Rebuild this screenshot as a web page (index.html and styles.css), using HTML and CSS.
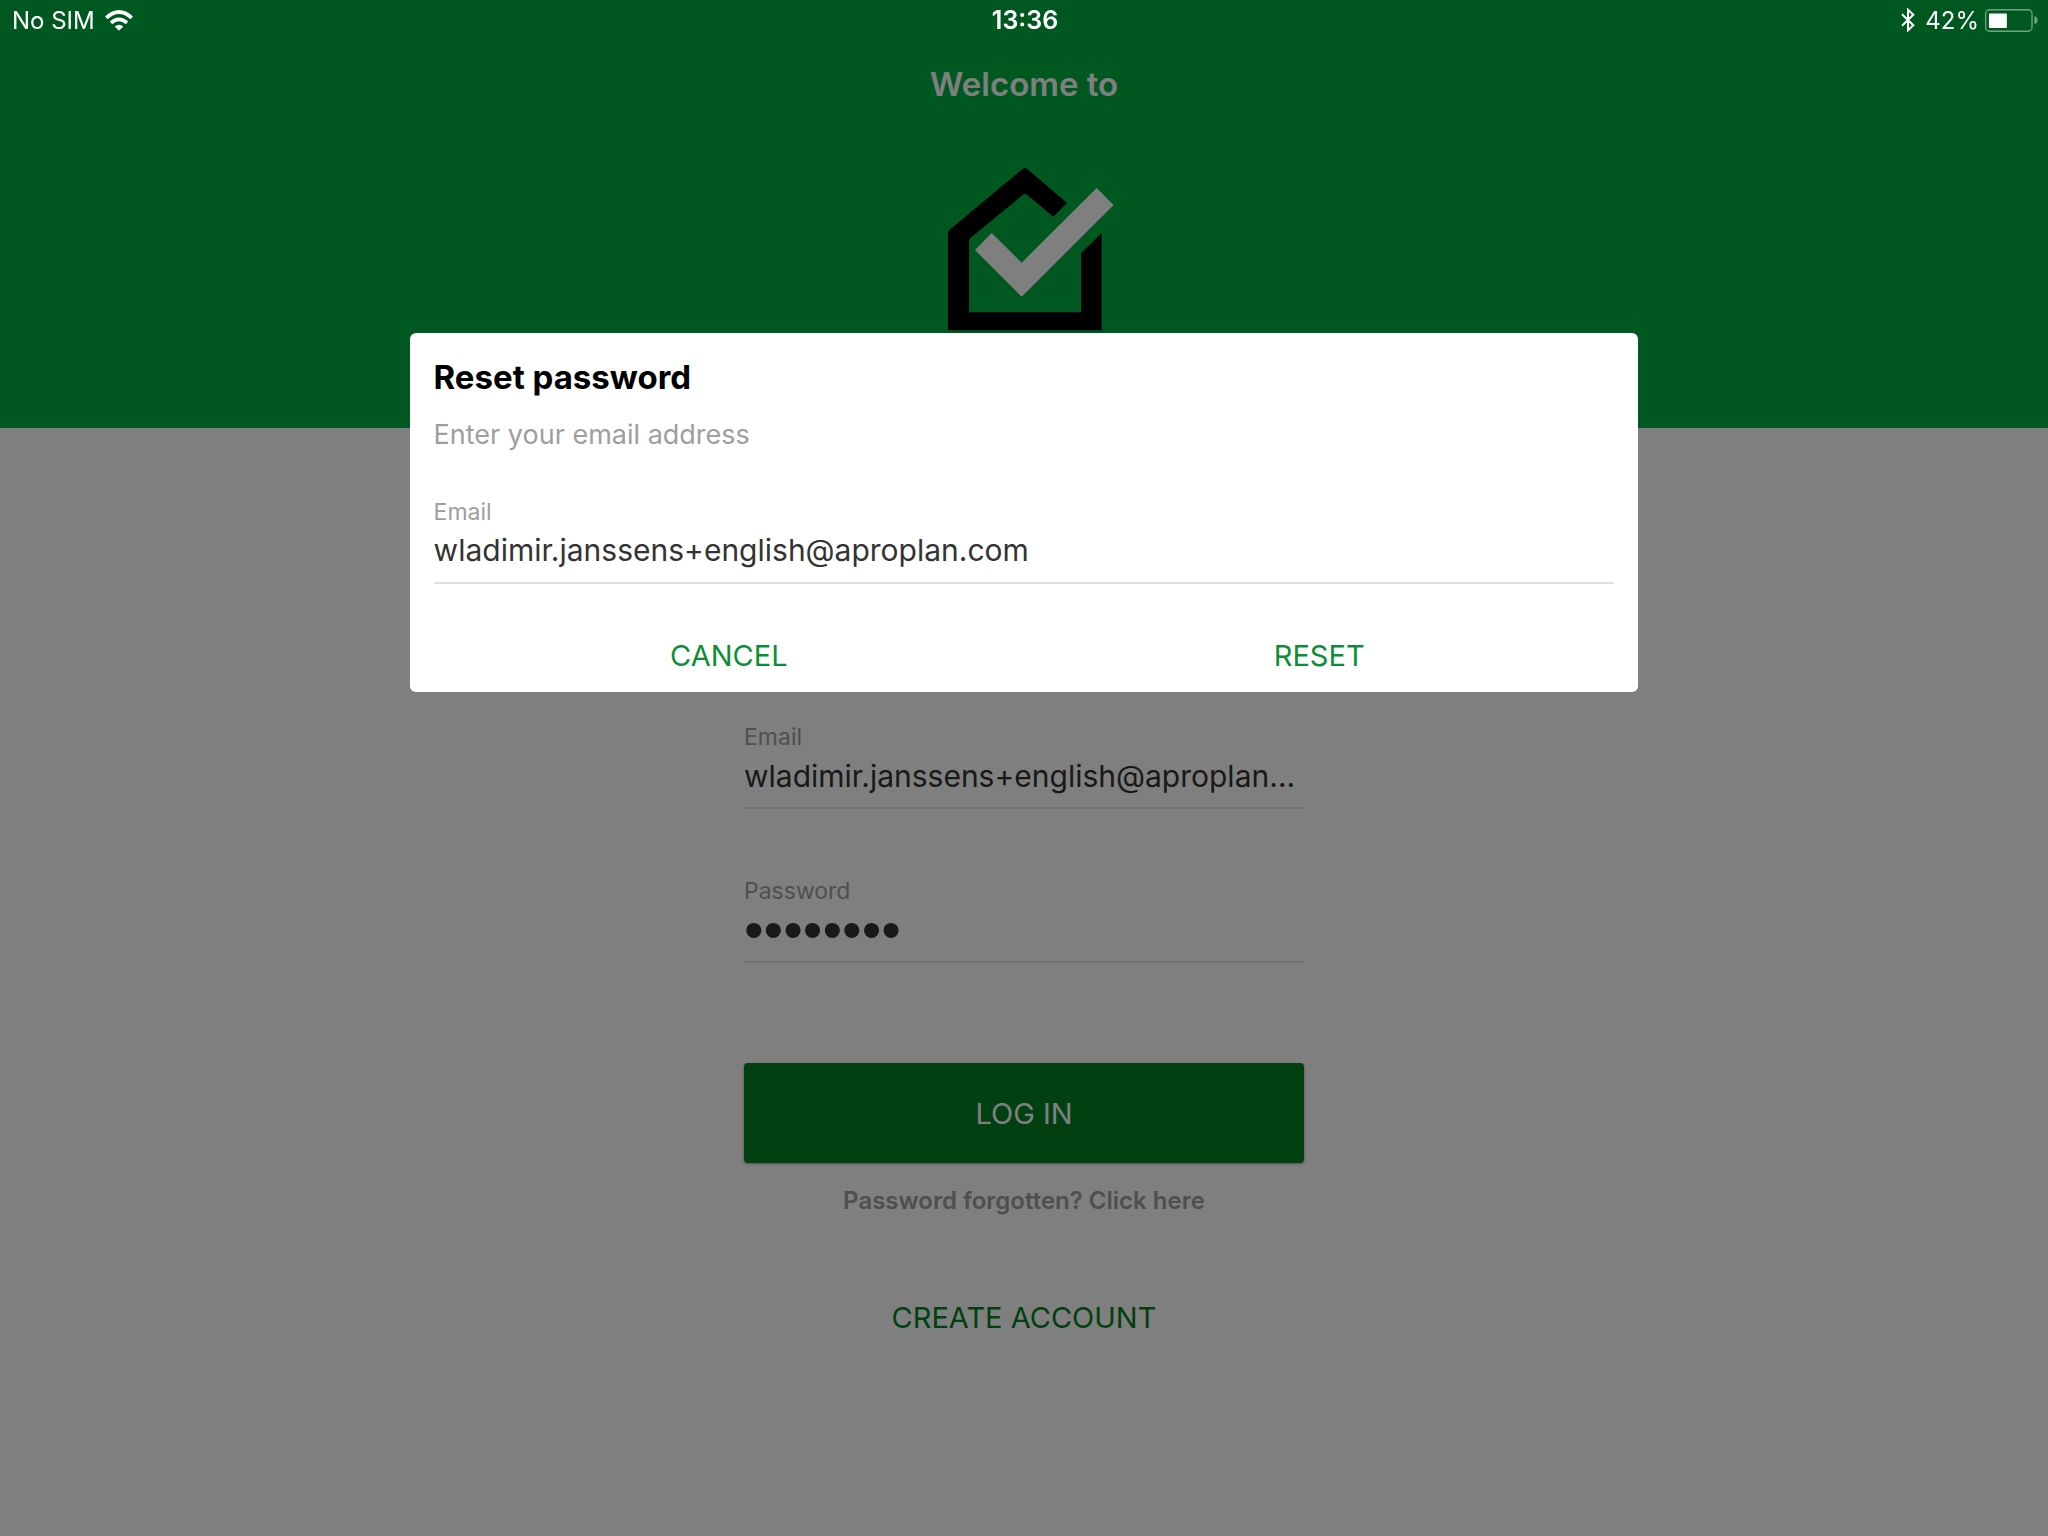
FILE: index.html
```
<!DOCTYPE html>
<html lang="en">
<head>
    <meta charset="UTF-8">
    <meta name="viewport" content="width=device-width, initial-scale=1.0">
    <title>Reset password</title>
    <link rel="stylesheet" href="styles.css">
</head>
<body>

    <header class="header">
        <div class="status-bar">
            <div class="status-left">
                <span>No SIM</span>
                <svg class="wifi" viewBox="0 0 84 62" width="28" height="21" aria-hidden="true">
                    <path d="M42 62 L29 49 Q42 38 55 49 Z" fill="#fff"/>
                    <path d="M18 38 Q42 17 66 38" fill="none" stroke="#fff" stroke-width="11"/>
                    <path d="M4 23 Q42 -12 80 23" fill="none" stroke="#fff" stroke-width="11"/>
                </svg>
            </div>
            <div class="status-time">13:36</div>
            <div class="status-right">
                <svg viewBox="0 0 42 72" width="14" height="24" aria-hidden="true">
                    <path d="M3 19 L37 52 L21 67 V5 L37 20 L3 53" fill="none" stroke="#fff" stroke-width="6"/>
                </svg>
                <span>42%</span>
                <svg class="battery" viewBox="0 0 160 69" width="53" height="23" aria-hidden="true">
                    <rect x="2" y="2" width="140" height="65" rx="12" fill="none" stroke="#fff" stroke-opacity="0.45" stroke-width="4"/>
                    <rect x="12" y="13" width="54" height="44" rx="2" fill="#fff"/>
                    <path d="M149 22 Q159 25 159 34 Q159 43 149 46 Z" fill="#fff" fill-opacity="0.45"/>
                </svg>
            </div>
        </div>
        <h1 class="welcome">Welcome to</h1>
        <svg class="logo" viewBox="42 53 540 489" width="180" height="163" aria-hidden="true">
            <path d="M309 55 Q315 51 321 55 L441 158 L400 199 L319 132 Q315 129 311 132 L150 264 Q147 267 147 271 V486 H483 V309 L545 248 V540 H84 V248 Q84 242 89 238 Z" fill="#000"/>
            <path d="M165 299 L215 248 L305 337 L530 113 L581 164 L305 439 Z" fill="#fff"/>
        </svg>
    </header>

    <main class="login">
        <form class="login-form">
            <div class="field">
                <label for="login-email">Email</label>
                <input type="text" id="login-email" value="wladimir.janssens+english@aproplan.com">
            </div>
            <div class="field">
                <label for="login-password">Password</label>
                <input type="password" id="login-password" value="password">
            </div>
            <button type="button" class="login-button">LOG IN</button>
            <a href="#" class="forgot">Password forgotten? Click here</a>
            <a href="#" class="create">CREATE ACCOUNT</a>
        </form>
    </main>

    <div class="overlay">
        <form class="modal" role="dialog" aria-labelledby="modal-title">
            <h2 id="modal-title">Reset password</h2>
            <p>Enter your email address</p>
            <div class="field">
                <label for="reset-email">Email</label>
                <input type="text" id="reset-email" value="wladimir.janssens+english@aproplan.com">
            </div>
            <div class="modal-buttons">
                <button type="button">CANCEL</button>
                <button type="button">RESET</button>
            </div>
        </form>
    </div>

</body>
</html>
```

FILE: styles.css
```
* {
    box-sizing: border-box;
}
body {
    margin: 0;
    min-height: 100vh;
    background-color: #ffffff;
    font-family: Inter, "Liberation Sans", sans-serif;
}
.header {
    display: flex;
    flex-direction: column;
    align-items: center;
    padding-bottom: 97px;
    background-color: #00b042;
}
/* stays above the overlay */
.status-bar {
    position: relative;
    z-index: 2;
    display: grid;
    grid-template-columns: 1fr auto 1fr;
    align-items: center;
    width: 100%;
    height: 40px;
    padding: 0 10px 0 12px;
    font-size: 24px;
    color: #ffffff;
}
.status-left,
.status-right {
    display: flex;
    align-items: center;
    gap: 10px;
}
.status-right {
    justify-content: flex-end;
}
.battery {
    margin-left: -4px;
}
.status-time {
    font-size: 25px;
    font-weight: 600;
}
.welcome {
    margin: 24px 0 64px;
    font-size: 33px;
    line-height: 40px;
    font-weight: 600;
    color: #ffffff;
}
.logo {
    display: block;
}
.login {
    display: flex;
    justify-content: center;
    padding-top: 294px;
}
.login-form {
    display: flex;
    flex-direction: column;
    width: 560px;
}
.field {
    display: flex;
    flex-direction: column;
}
.field label {
    font-size: 23px;
    line-height: 30px;
    color: #9e9e9e;
}
.field input {
    width: 100%;
    height: 57px;
    padding: 0 6px 8px 0;
    border: none;
    border-bottom: 2px solid #e0e0e0;
    outline: none;
    background: none;
    font-family: inherit;
    font-size: 30px;
    color: #333333;
    text-overflow: ellipsis;
}
/* bigger dots */
.field input[type="password"] {
    font-family: "Liberation Sans", Arial, sans-serif;
    font-size: 56px;
}
.login-form .field {
    margin-bottom: 67px;
}
.login-button {
    height: 100px;
    margin-top: 33px;
    border: none;
    border-radius: 4px;
    box-shadow: 0 1px 3px rgba(0, 0, 0, 0.4);
    background-color: #008022;
    font-family: inherit;
    font-size: 29px;
    color: #ffffff;
    cursor: pointer;
}
.forgot,
.create {
    align-self: center;
    text-decoration: none;
}
.forgot {
    margin-top: 23px;
    font-size: 24px;
    line-height: 30px;
    font-weight: 600;
    color: #9e9e9e;
}
.create {
    margin-top: 82px;
    font-size: 29px;
    line-height: 40px;
    color: #008022;
}
.overlay {
    position: fixed;
    inset: 0;
    z-index: 1;
    display: flex;
    justify-content: center;
    align-items: center;
    padding-bottom: 33.3vh;
    background-color: rgba(0, 0, 0, 0.5);
}
.modal {
    width: 60%;
    padding: 24px 24px 8px;
    border-radius: 6px;
    background-color: #ffffff;
}
.modal h2 {
    margin: 0;
    font-size: 33px;
    line-height: 40px;
    font-weight: 700;
    color: #000000;
}
.modal p {
    margin: 20px 0 44px;
    font-size: 27px;
    line-height: 36px;
    color: #9e9e9e;
}
.modal-buttons {
    display: flex;
    margin-top: 44px;
}
.modal-buttons button {
    flex: 1;
    height: 56px;
    padding: 0;
    border: none;
    background: none;
    font-family: inherit;
    font-size: 29px;
    color: #0b8f36;
    cursor: pointer;
}
```
